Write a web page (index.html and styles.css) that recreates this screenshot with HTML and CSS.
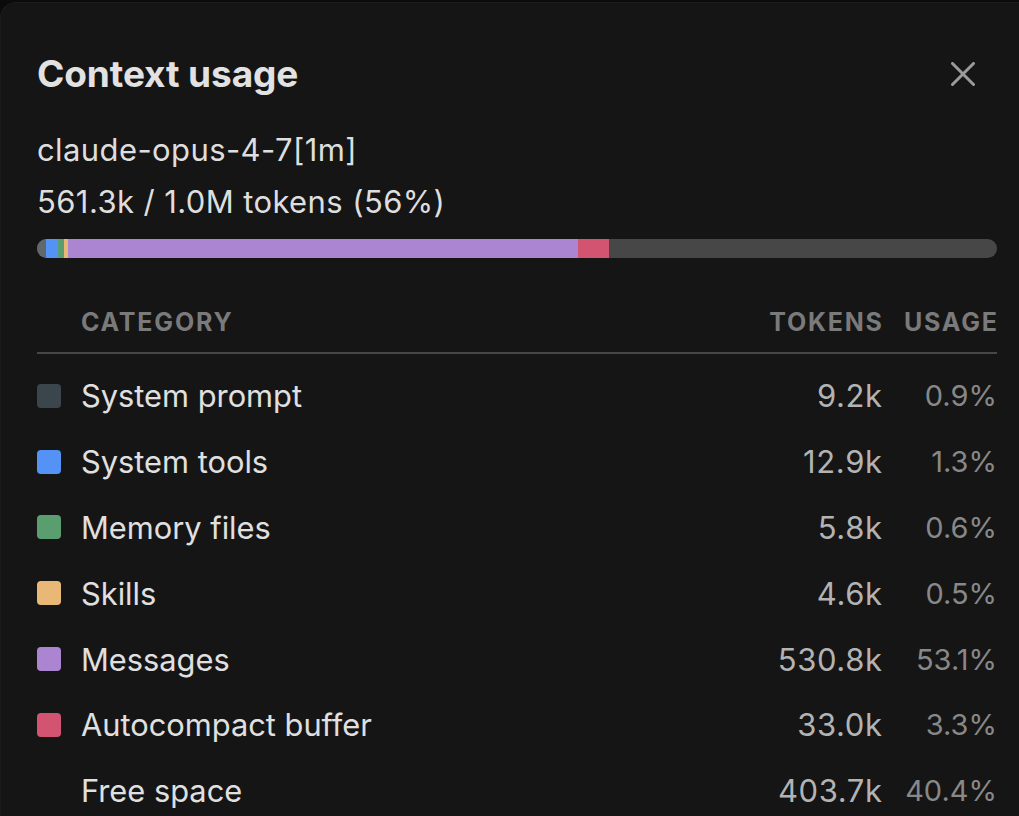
FILE: index.html
```html
<!DOCTYPE html>
<html lang="en">
<head>
<meta charset="utf-8">
<title>Context usage</title>
<link rel="stylesheet" href="styles.css">
</head>
<body>
<div class="frame">
  <div class="panel">
    <div class="head">
      <h1 class="title">Context usage</h1>
      <button class="close" aria-label="Close">
        <svg width="24" height="24" viewBox="0 0 24 24"><path d="M1.5 1.5L22.5 22.5M22.5 1.5L1.5 22.5" stroke="#9b9b9b" stroke-width="3" stroke-linecap="round" fill="none"/></svg>
      </button>
    </div>
    <div class="model">claude-opus-4-7[1m]</div>
    <div class="total">561.3k / 1.0M tokens (56%)</div>
    <div class="bar">
      <span class="seg c-sys-bar" style="width:0.92%"></span>
      <span class="seg c-tools" style="width:1.29%"></span>
      <span class="seg c-mem" style="width:0.58%"></span>
      <span class="seg c-skills" style="width:0.46%"></span>
      <span class="seg c-msg" style="width:53.08%"></span>
      <span class="seg c-auto" style="width:3.30%"></span>
    </div>
    <div class="table">
      <div class="thead">
        <span></span>
        <span class="th">Category</span>
        <span class="th num">Tokens</span>
        <span class="th num">Usage</span>
      </div>
      <div class="row"><span class="sw c-sys"></span><span class="name">System prompt</span><span class="tok">9.2k</span><span class="pct">0.9%</span></div>
      <div class="row"><span class="sw c-tools"></span><span class="name">System tools</span><span class="tok">12.9k</span><span class="pct">1.3%</span></div>
      <div class="row"><span class="sw c-mem"></span><span class="name">Memory files</span><span class="tok">5.8k</span><span class="pct">0.6%</span></div>
      <div class="row"><span class="sw c-skills"></span><span class="name">Skills</span><span class="tok">4.6k</span><span class="pct">0.5%</span></div>
      <div class="row"><span class="sw c-msg"></span><span class="name">Messages</span><span class="tok">530.8k</span><span class="pct">53.1%</span></div>
      <div class="row"><span class="sw c-auto"></span><span class="name">Autocompact buffer</span><span class="tok">33.0k</span><span class="pct">3.3%</span></div>
      <div class="row"><span class="sw"></span><span class="name">Free space</span><span class="tok">403.7k</span><span class="pct">40.4%</span></div>
    </div>
  </div>
</div>
</body>
</html>
```

FILE: styles.css
```css
* { box-sizing: border-box; }
html, body {
  margin: 0;
  padding: 0;
  background: #0b0b0b;
  height: 100%;
  overflow: hidden;
}
body {
  font-family: Inter, "Liberation Sans", sans-serif;
  color: #e0e0e0;
}
.frame {
  padding-top: 2px;
  height: 100%;
}
.panel {
  background: #151515;
  border-top-left-radius: 16px;
  height: 100%;
  padding: 49px 22px 0 36px;
  border-top: 1px solid #1c1c1c;
  border-left: 1px solid #1c1c1c;
}
.head {
  display: flex;
  align-items: center;
  justify-content: space-between;
}
.title {
  margin: 0;
  font-size: 37px;
  font-weight: 700;
  line-height: 44px;
  color: #e2e2e2;
  letter-spacing: -0.1px;
}
.close {
  background: none;
  border: 0;
  padding: 0;
  margin-right: 22px;
  width: 24px;
  height: 24px;
  display: flex;
  cursor: pointer;
}
.model,
.total {
  font-size: 31px;
  line-height: 40px;
  letter-spacing: 0.4px;
  color: #dedede;
}
.model { margin-top: 34px; }
.total { margin-top: 12px; }
.bar {
  margin-top: 17px;
  height: 19px;
  border-radius: 10px;
  background: #474747;
  overflow: hidden;
  display: flex;
}
.seg { display: block; height: 100%; }
.c-sys-bar { background: #5f696d; }
.c-sys { background: #3b464c; }
.c-tools { background: #5592f5; }
.c-mem { background: #5a9e6f; }
.c-skills { background: #e9b877; }
.c-msg { background: #ab84d2; }
.c-auto { background: #d25470; }

.table { margin-top: 50px; }
.thead, .row {
  display: grid;
  grid-template-columns: 24px 1fr auto 95px;
  column-gap: 20px;
  align-items: center;
}
.thead {
  height: 46px;
  border-bottom: 2px solid #474747;
  align-items: start;
}
.th {
  font-size: 25px;
  font-weight: 700;
  letter-spacing: 1.8px;
  text-transform: uppercase;
  color: #7a7a7a;
  line-height: 28px;
  margin-right: -1.8px;
}
.num { text-align: right; }
.row { height: 65.8px; }
.thead + .row { margin-top: 9px; }
.sw {
  width: 24px;
  height: 24px;
  border-radius: 4px;
}
.name {
  font-size: 30.8px;
  color: #e0e0e0;
}
.tok {
  font-size: 31px;
  letter-spacing: 0.6px;
  margin-right: -0.6px;
  color: #b3b3b3;
  text-align: right;
}
.pct {
  font-size: 29px;
  color: #888888;
  text-align: right;
}
```
